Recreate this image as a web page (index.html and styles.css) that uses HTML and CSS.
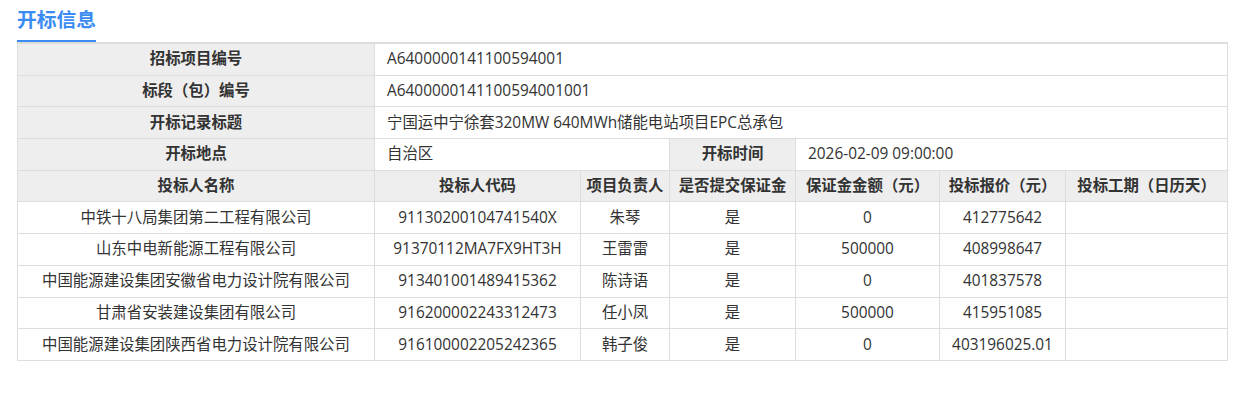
FILE: index.html
```html
<!DOCTYPE html>
<html lang="zh-CN">
<head>
<meta charset="utf-8">
<link rel="stylesheet" href="styles.css">
</head>
<body>
<div class="page">
  <div class="title-bar"><h2 class="title">开标信息</h2></div>
  <table class="info">
    <colgroup>
      <col class="c1"><col class="c2"><col class="c3"><col class="c4"><col class="c5"><col class="c6"><col class="c7">
    </colgroup>
    <tr><th>招标项目编号</th><td class="val" colspan="6">A6400000141100594001</td></tr>
    <tr><th>标段（包）编号</th><td class="val" colspan="6">A6400000141100594001001</td></tr>
    <tr><th>开标记录标题</th><td class="val" colspan="6">宁国运中宁徐套320MW 640MWh储能电站项目EPC总承包</td></tr>
    <tr><th>开标地点</th><td class="val" colspan="2">自治区</td><th>开标时间</th><td class="val" colspan="3">2026-02-09 09:00:00</td></tr>
    <tr><th>投标人名称</th><th>投标人代码</th><th>项目负责人</th><th>是否提交保证金</th><th>保证金金额（元）</th><th>投标报价（元）</th><th>投标工期（日历天）</th></tr>
    <tr><td>中铁十八局集团第二工程有限公司</td><td>91130200104741540X</td><td>朱琴</td><td>是</td><td>0</td><td>412775642</td><td></td></tr>
    <tr><td>山东中电新能源工程有限公司</td><td>91370112MA7FX9HT3H</td><td>王雷雷</td><td>是</td><td>500000</td><td>408998647</td><td></td></tr>
    <tr><td>中国能源建设集团安徽省电力设计院有限公司</td><td>913401001489415362</td><td>陈诗语</td><td>是</td><td>0</td><td>401837578</td><td></td></tr>
    <tr><td>甘肃省安装建设集团有限公司</td><td>916200002243312473</td><td>任小凤</td><td>是</td><td>500000</td><td>415951085</td><td></td></tr>
    <tr><td>中国能源建设集团陕西省电力设计院有限公司</td><td>916100002205242365</td><td>韩子俊</td><td>是</td><td>0</td><td>403196025.01</td><td></td></tr>
  </table>
</div>
</body>
</html>
```

FILE: styles.css
```css
html, body {
  margin: 0;
  padding: 0;
  background: #fff;
}
body {
  font-family: "Open Sans", "Noto Sans CJK SC", sans-serif;
  color: #333;
  font-size: 15.4px;
}
.page {
  padding: 4px 32px 0 17px;
}
.title-bar {
  display: flex;
}
.title {
  margin: 0;
  font-family: "Noto Sans CJK SC", sans-serif;
  font-size: 19.8px;
  font-weight: bold;
  color: #3a8cf2;
  line-height: 30px;
  padding-bottom: 6px;
  border-bottom: 2px solid #3a8cf2;
}
.info {
  width: 1210px;
  border-collapse: collapse;
  table-layout: fixed;
  border-top: 2px solid #ddd;
}
.c1 { width: 357px; }
.c2 { width: 206px; }
.c3 { width: 89px; }
.c4 { width: 126px; }
.c5 { width: 144px; }
.c6 { width: 126px; }
.c7 { width: 162px; }
.info th, .info td {
  border: 1px solid #ddd;
  height: 30.7px;
  padding: 0 4px;
  text-align: center;
  vertical-align: middle;
  white-space: nowrap;
  line-height: 20px;
  font-size: 15.4px;
}
.info th {
  background: #eee;
  font-weight: bold;
  color: #333;
}
.info td.val {
  text-align: left;
  padding-left: 12px;
}
```
